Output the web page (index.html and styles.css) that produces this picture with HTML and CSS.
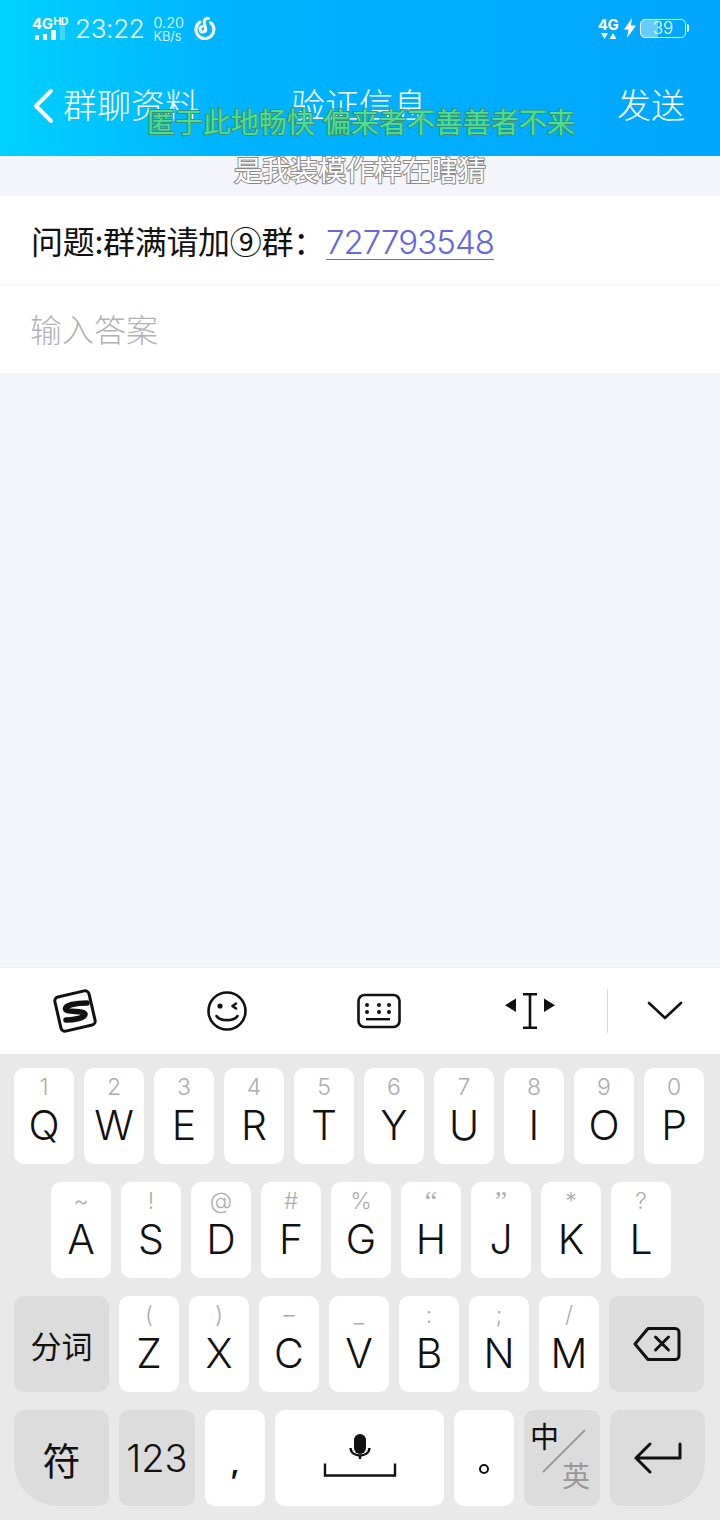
FILE: index.html
```html
<!DOCTYPE html>
<html lang="zh-CN">
<head>
    <meta charset="UTF-8">
    <meta name="viewport" content="width=device-width, initial-scale=1.0">
    <title>验证信息</title>
    <link rel="stylesheet" href="styles.css">
</head>
<body>
    <div class="header">
        <div class="status-bar">
            <div class="status-left">
                <div class="net">
                    <div class="net-label">4G<span class="net-hd">HD</span></div>
                    <div class="signal"><i class="b1"></i><i class="b2"></i><i class="b3"></i><i class="b4"></i></div>
                </div>
                <span class="time">23:22</span>
                <div class="speed"><span>0.20</span><span class="speed-unit">KB/s</span></div>
                <svg class="music-icon" width="22" height="24" viewBox="0 0 22 24" fill="none" stroke="#fff" stroke-width="3" stroke-linecap="round">
                    <path d="M6 6A9 9 0 1 0 16.500 6.500"/>
                    <path d="M14.500 2.500C11 1.800 9.600 4.500 10.400 7.500L11.600 12.500A2.800 2.800 0 1 1 8 10.500"/>
                </svg>
            </div>
            <div class="status-right">
                <div class="net-right">
                    <span class="net-label-small">4G</span>
                    <svg width="18" height="8" viewBox="0 0 18 8" fill="#fff"><path d="M2 1h7L5.500 7z"/><path d="M10.500 7h7L14 1z"/></svg>
                </div>
                <svg width="12" height="20" viewBox="0 0 12 20" fill="#fff"><path d="M8 0L0 11.500h4.500L3 20l9-12.500H7z"/></svg>
                <div class="battery">
                    <div class="battery-level"></div>
                    <span class="battery-text">39</span>
                </div>
                <div class="battery-tip"></div>
            </div>
        </div>
        <div class="nav">
            <div class="nav-back">
                <svg width="22" height="36" viewBox="0 0 22 36" fill="none" stroke="#fff" stroke-width="4" stroke-linecap="round" stroke-linejoin="round"><path d="M19 3L4 18l15 15"/></svg>
                <span>群聊资料</span>
            </div>
            <div class="nav-title">验证信息</div>
            <div class="nav-send">发送</div>
        </div>
    </div>

    <div class="content">
        <div class="card">
            <div class="row row-question">问题:群满请加⑨群：<a class="group-link" href="#">727793548</a></div>
            <div class="row row-answer">输入答案</div>
        </div>
    </div>

    <div class="toolbar">
        <svg class="tool tool-s" width="46" height="46" viewBox="0 0 46 46" fill="none" stroke="#111">
            <rect x="5.500" y="5.500" width="35" height="35" rx="4" stroke-width="3" transform="rotate(-13 23 23)"/>
            <path d="M35 15C24 15 13 17 13.500 21C14 25 32 22 33 26C33.500 30 22 32 14 32" stroke-width="5.500" stroke-linecap="round"/>
        </svg>
        <svg class="tool tool-face" width="40" height="40" viewBox="0 0 40 40" fill="none" stroke="#111" stroke-width="2.600" stroke-linecap="round" stroke-linejoin="round">
            <circle cx="20" cy="20" r="18.500"/>
            <circle cx="13" cy="15" r="2.600" fill="#111" stroke="none"/>
            <path d="M29 12.500L25.500 15l3.500 2.500"/>
            <path d="M9.500 25C13 30.500 27 30.500 30.500 25"/>
        </svg>
        <svg class="tool tool-kb" width="44" height="36" viewBox="0 0 44 36" fill="#111" stroke="none">
            <rect x="1.500" y="2" width="41" height="32" rx="6" fill="none" stroke="#111" stroke-width="2.600"/>
            <circle cx="10" cy="12" r="2"/><circle cx="22" cy="12" r="2"/><circle cx="32" cy="12" r="2"/>
            <circle cx="10" cy="19" r="2"/><circle cx="22" cy="19" r="2"/><circle cx="32" cy="19" r="2"/>
            <rect x="9" y="25" width="24" height="2.400"/>
        </svg>
        <svg class="tool tool-cursor" width="52" height="36" viewBox="0 0 52 36" fill="#111">
            <path d="M12 4.500V18L1 11.200z" transform="translate(0 1)"/>
            <path d="M40 5.500V19l11-6.800z"/>
            <path d="M19 1.200h14M19 34.800h14M26 1.200v33.600" fill="none" stroke="#111" stroke-width="2.600"/>
        </svg>
        <div class="tool-divider"></div>
        <svg class="tool tool-down" width="36" height="20" viewBox="0 0 36 20" fill="none" stroke="#111" stroke-width="2.600" stroke-linecap="round" stroke-linejoin="round"><path d="M2 2l16 15L34 2"/></svg>
    </div>

    <div class="keyboard">
        <div class="key-row">
            <div class="key"><span class="alt">1</span><span class="letter">Q</span></div>
            <div class="key"><span class="alt">2</span><span class="letter">W</span></div>
            <div class="key"><span class="alt">3</span><span class="letter">E</span></div>
            <div class="key"><span class="alt">4</span><span class="letter">R</span></div>
            <div class="key"><span class="alt">5</span><span class="letter">T</span></div>
            <div class="key"><span class="alt">6</span><span class="letter">Y</span></div>
            <div class="key"><span class="alt">7</span><span class="letter">U</span></div>
            <div class="key"><span class="alt">8</span><span class="letter">I</span></div>
            <div class="key"><span class="alt">9</span><span class="letter">O</span></div>
            <div class="key"><span class="alt">0</span><span class="letter">P</span></div>
        </div>
        <div class="key-row row-center">
            <div class="key"><span class="alt">~</span><span class="letter">A</span></div>
            <div class="key"><span class="alt">!</span><span class="letter">S</span></div>
            <div class="key"><span class="alt">@</span><span class="letter">D</span></div>
            <div class="key"><span class="alt">#</span><span class="letter">F</span></div>
            <div class="key"><span class="alt">%</span><span class="letter">G</span></div>
            <div class="key"><span class="alt alt-quote">“</span><span class="letter">H</span></div>
            <div class="key"><span class="alt alt-quote">”</span><span class="letter">J</span></div>
            <div class="key"><span class="alt">*</span><span class="letter">K</span></div>
            <div class="key"><span class="alt">?</span><span class="letter">L</span></div>
        </div>
        <div class="key-row">
            <div class="key key-gray key-side key-text">分词</div>
            <div class="key"><span class="alt">(</span><span class="letter">Z</span></div>
            <div class="key"><span class="alt">)</span><span class="letter">X</span></div>
            <div class="key"><span class="alt">–</span><span class="letter">C</span></div>
            <div class="key"><span class="alt">_</span><span class="letter">V</span></div>
            <div class="key"><span class="alt">:</span><span class="letter">B</span></div>
            <div class="key"><span class="alt">;</span><span class="letter">N</span></div>
            <div class="key"><span class="alt">/</span><span class="letter">M</span></div>
            <div class="key key-gray key-side key-icon">
                <svg width="48" height="36" viewBox="0 0 48 36" fill="none" stroke="#111" stroke-width="3" stroke-linecap="round" stroke-linejoin="round">
                    <path d="M15 2.500H42a4 4 0 0 1 4 4V29.500a4 4 0 0 1-4 4H15L2 18z"/>
                    <path d="M22.500 11l13 13M35.500 11l-13 13"/>
                </svg>
            </div>
        </div>
        <div class="key-row">
            <div class="key key-gray key-side key-text key-sym">符</div>
            <div class="key key-gray key-123">123</div>
            <div class="key key-punct">,</div>
            <div class="key key-space">
                <svg width="74" height="44" viewBox="0 0 74 44" fill="none" stroke="#111" stroke-width="2.400">
                    <rect x="31" y="0" width="12" height="20" rx="6" fill="#111" stroke="none"/>
                    <path d="M27.500 14C28 24 46 24 46.500 14" />
                    <path d="M37 22v3" />
                    <path d="M2 29.500V41.500H72V29.500"/>
                </svg>
            </div>
            <div class="key key-punct key-period"><span class="period-dot"></span></div>
            <div class="key key-gray key-lang">
                <span class="lang-zh">中</span>
                <svg class="lang-slash" width="76" height="96" viewBox="0 0 76 96"><path d="M19 62L61 20" stroke="#999" stroke-width="2"/></svg>
                <span class="lang-en">英</span>
            </div>
            <div class="key key-gray key-side key-icon key-enter">
                <svg width="48" height="32" viewBox="0 0 48 32" fill="none" stroke="#111" stroke-width="3" stroke-linecap="round" stroke-linejoin="round">
                    <path d="M46 2V16H2M16 2L2 16l14 14"/>
                </svg>
            </div>
        </div>
    </div>

    <!-- lyric overlay floats above everything -->
    <div class="lyric lyric-top">匿于此地畅快 偏来者不善善者不来</div>
    <div class="lyric lyric-bottom">是我装模作样在瞎猜</div>
</body>
</html>
```

FILE: styles.css
```css
html, body { margin: 0; padding: 0; width: 720px; height: 1520px; overflow: hidden; box-sizing: border-box; }
*, *::before, *::after { box-sizing: inherit; }
body { position: relative; display: flex; flex-direction: column; background: #f4f5fa; font-family: Inter, "Noto Sans CJK SC", sans-serif; color: #111; }

.header { height: 156px; background: linear-gradient(90deg, #00d2ff 0%, #00b4ff 30%, #00a6ff 100%); color: #fff; flex-shrink: 0; }
.status-bar { height: 56px; display: flex; justify-content: space-between; align-items: center; padding: 0 32px; }
.status-left, .status-right { display: flex; align-items: center; }
.net { width: 34px; margin-top: -2px; }
.net-label { font-size: 15px; line-height: 15px; font-weight: 700; letter-spacing: -0.5px; white-space: nowrap; }
.net-hd { font-size: 10.500px; vertical-align: 4px; margin-left: 1px; }
.signal { display: flex; align-items: flex-end; gap: 4px; height: 12px; margin-top: -3px; padding-left: 3px; }
.signal i { display: block; width: 4px; background: #fff; }
.signal .b1 { height: 5px; }
.signal .b2 { height: 6px; }
.signal .b3 { height: 10px; width: 5px; }
.signal .b4 { height: 16px; width: 5px; opacity: 0.25; }
.time { font-size: 26px; margin-left: 9px; letter-spacing: -0.3px; font-weight: 300; }
.speed { display: flex; flex-direction: column; font-size: 14.500px; line-height: 15px; margin-left: 9px; font-weight: 300; }
.speed-unit { font-size: 13px; line-height: 12px; }
.music-icon { margin-left: 10px; }
.status-right { margin-right: -1px; }
.net-right { display: flex; flex-direction: column; align-items: center; margin-right: 7px; width: 18px; }
.net-label-small { font-size: 15px; line-height: 15px; font-weight: 700; letter-spacing: -0.5px; }
.battery { position: relative; width: 46px; height: 19px; border: 1.500px solid #fff; border-radius: 5px; margin-left: 4px; display: flex; align-items: center; justify-content: center; overflow: hidden; }
.battery-level { position: absolute; left: 0; top: 0; bottom: 0; width: 39%; background: rgba(255, 255, 255, 0.4); }
.battery-text { position: relative; font-size: 17px; line-height: 17px; font-weight: 300; }
.battery-tip { width: 2px; height: 8px; background: #fff; border-radius: 0 2px 2px 0; margin-left: 1px; }

.nav { height: 100px; display: flex; align-items: flex-start; padding: 30px 35px 0 32px; position: relative; font-size: 34px; line-height: 40px; font-weight: 300; }
.nav-back { display: flex; align-items: center; gap: 9px; }
.nav-title { margin-left: 92px; }
.nav-send { margin-left: auto; }

.content { flex: 1; padding-top: 40px; }
.card { background: #fff; }
.row { height: 88px; display: flex; align-items: center; padding-left: 31px; font-size: 32px; font-weight: 300; font-family: "Noto Sans CJK SC", sans-serif; }
.row-question { height: 89px; border-bottom: 1px solid #f4f5fa; color: #111; white-space: nowrap; font-weight: 400; letter-spacing: -0.3px; }
.row-answer { color: #b2b2b2; padding-left: 30px; padding-bottom: 3px; }
.group-link { color: #6666dd; font-family: Inter, sans-serif; font-weight: 300; text-decoration: none; border-bottom: 1px solid #6666dd; font-size: 33px; line-height: 32px; padding-top: 5px; padding-bottom: 1px; margin-top: 1px; margin-left: 1px; letter-spacing: -0.9px; }

.toolbar { height: 87px; background: #fff; border-top: 1px solid #ededf2; display: flex; align-items: center; position: relative; flex-shrink: 0; padding-left: 52px; }
.tool { flex-shrink: 0; }
.tool-face { margin-left: 109px; }
.tool-kb { margin-left: 110px; }
.tool-cursor { margin-left: 103px; }
.tool-divider { width: 1px; height: 44px; background: #d8d8d8; margin-left: 51px; }
.tool-down { margin-left: 39px; }

.keyboard { height: 466px; background: #e9e9e9; padding: 14px 15px 0 14px; display: flex; flex-direction: column; gap: 18px; flex-shrink: 0; }
.key-row { display: flex; gap: 10px; height: 96px; }
.row-center { padding-left: 37px; }
.key { width: 60px; height: 96px; background: #fff; border-radius: 10px; display: flex; flex-direction: column; align-items: center; flex-shrink: 0; overflow: hidden; }
.alt { height: 24px; line-height: 24px; margin-top: 7px; font-size: 23px; font-weight: 300; color: #adadad; }
.alt-quote { font-family: "Liberation Serif", serif; font-size: 28px; }
.letter { height: 46px; line-height: 46px; font-size: 41px; font-weight: 350; color: #111; margin-top: 3px; }
.key-gray { background: #dcdcdc; }
.key-side { width: 95px; }
.key-text { justify-content: center; font-size: 31px; font-weight: 400; }
.key-icon { justify-content: center; }
.key-sym { font-size: 38px; border-bottom-left-radius: 44px; }
.key-enter { border-bottom-right-radius: 44px; }
.key-123 { width: 76px; justify-content: center; font-size: 38px; font-weight: 300; }
.key-punct { justify-content: center; font-size: 30px; font-weight: 600; padding-top: 8px; }
.key-space { width: 169px; justify-content: flex-start; padding-top: 24px; }
.key-period { padding-top: 22px; }
.period-dot { width: 10px; height: 10px; border: 2px solid #111; border-radius: 50%; }
.key-lang { width: 76px; position: relative; }
.lang-zh { position: absolute; left: 6px; top: 10px; font-size: 29px; line-height: 36px; font-weight: 400; }
.lang-en { position: absolute; right: 10px; bottom: 12px; font-size: 28px; line-height: 34px; color: #999; font-weight: 400; }
.lang-slash { position: absolute; left: 0; top: 0; }

.lyric { position: absolute; left: 0; width: 720px; text-align: center; font-size: 28px; line-height: 36px; white-space: nowrap; font-weight: 400; paint-order: stroke fill; }
.lyric-top { top: 105px; color: #4be08e; -webkit-text-stroke: 2px #3a8f78; left: 1px; }
.lyric-bottom { top: 153px; color: #fff; -webkit-text-stroke: 2px #8a8a8a; }
```
